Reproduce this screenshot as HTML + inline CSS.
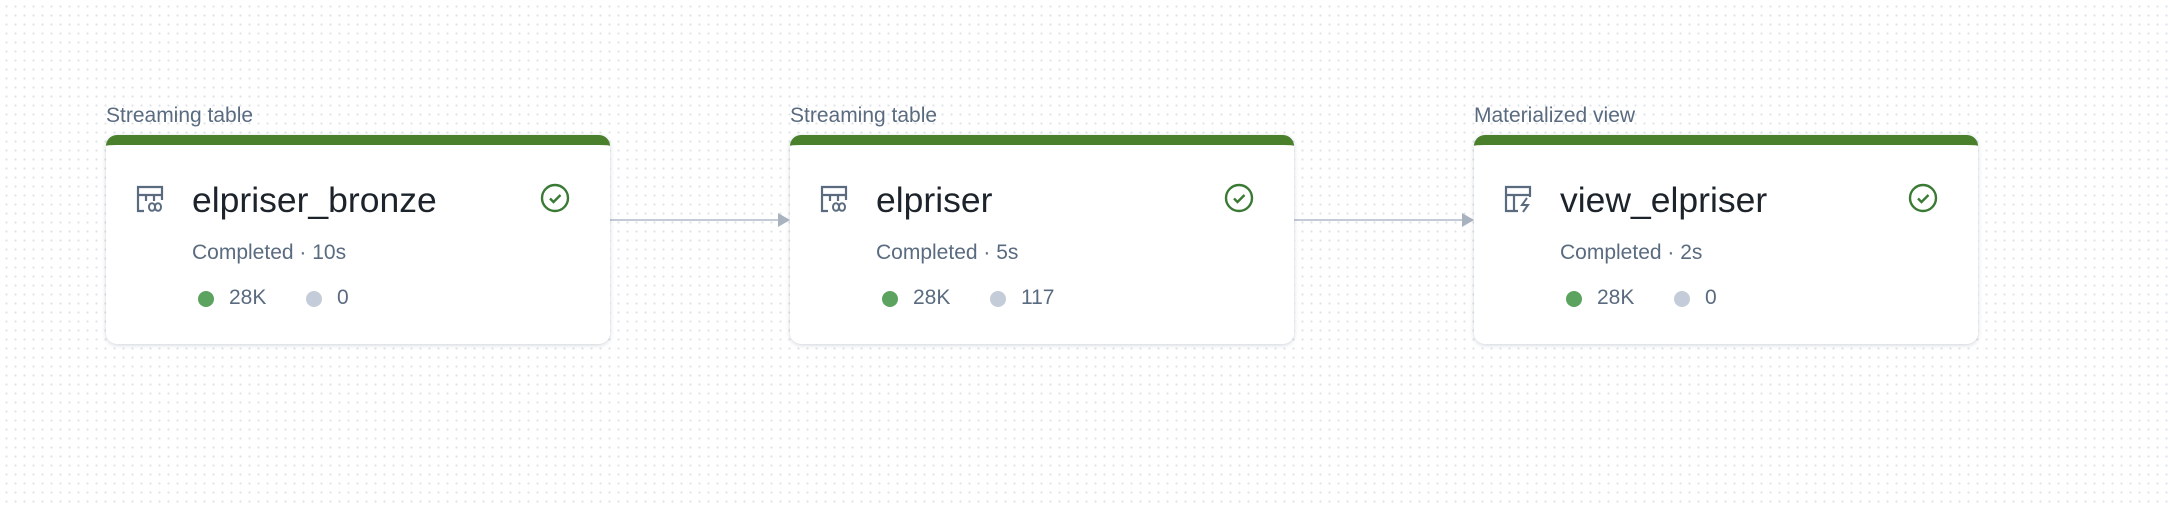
<!DOCTYPE html>
<html><head><style>
body{margin:0;width:2168px;height:506px;overflow:hidden;background:#fff;
background-image:radial-gradient(circle,#dfe3e8 1px,transparent 1.3px);background-size:9px 9px;background-position:2px 2px;
font-family:"Liberation Sans",sans-serif;position:relative}
.lbl{position:absolute;top:104px;font-size:21px;color:#5a6b80}
.card{position:absolute;top:135px;width:504px;height:209px;background:#fff;border-radius:11px;
border-top:10px solid #4a7f2c;box-sizing:border-box;box-shadow:0 1px 4px rgba(60,80,110,.25)}
.ic{position:absolute;left:30px;top:40px}
.t{position:absolute;left:86px;top:35px;font-size:35.5px;color:#1d232b}
.c{position:absolute;left:86px;top:96px;font-size:21px;color:#5a6b80}
.s{position:absolute;top:141px;font-size:21px;color:#5a6b80}
.dot{position:absolute;top:146px;width:16px;height:16px;border-radius:50%}
.chk{position:absolute;left:434px;top:38px}
.edge{position:absolute;top:219px;height:2px;background:#c3cbd7}
</style></head><body>

<div class="lbl" style="left:106px">Streaming table</div>
<div class="lbl" style="left:790px">Streaming table</div>
<div class="lbl" style="left:1474px">Materialized view</div>

<div class="edge" style="left:610px;width:172px"></div>
<svg style="position:absolute;left:778px;top:213px" width="12" height="14"><path d="M0 0L12 7L0 14Z" fill="#a9b3c0"/></svg>
<div class="edge" style="left:1294px;width:172px"></div>
<svg style="position:absolute;left:1462px;top:213px" width="12" height="14"><path d="M0 0L12 7L0 14Z" fill="#a9b3c0"/></svg>

<!-- card 1 -->
<div class="card" style="left:106px">
<svg class="ic" width="28" height="28" viewBox="0 0 28 28" fill="none" stroke="#5a6b80" stroke-width="2.2"><path d="M2 2h24v8H2zM2 2v24h6M10 10v6M18 10v6M26 10v5"/><path d="M13 22c0-5 6-5 6 0s6 5 6 0-6-5-6 0-6 5-6 0" stroke-width="2"/></svg>
<div class="t">elpriser_bronze</div>
<svg class="chk" width="30" height="30" viewBox="0 0 30 30" fill="none" stroke="#3a7a35" stroke-width="2.4"><circle cx="15" cy="15" r="13"/><path d="M10 15.5l3.5 3.5 7-7"/></svg>
<div class="c">Completed · 10s</div>
<div class="dot" style="left:92px;background:#5ca35f"></div><div class="s" style="left:123px">28K</div>
<div class="dot" style="left:200px;background:#c3ccd8"></div><div class="s" style="left:231px">0</div>
</div>

<!-- card 2 -->
<div class="card" style="left:790px">
<svg class="ic" width="28" height="28" viewBox="0 0 28 28" fill="none" stroke="#5a6b80" stroke-width="2.2"><path d="M2 2h24v8H2zM2 2v24h6M10 10v6M18 10v6M26 10v5"/><path d="M13 22c0-5 6-5 6 0s6 5 6 0-6-5-6 0-6 5-6 0" stroke-width="2"/></svg>
<div class="t">elpriser</div>
<svg class="chk" width="30" height="30" viewBox="0 0 30 30" fill="none" stroke="#3a7a35" stroke-width="2.4"><circle cx="15" cy="15" r="13"/><path d="M10 15.5l3.5 3.5 7-7"/></svg>
<div class="c">Completed · 5s</div>
<div class="dot" style="left:92px;background:#5ca35f"></div><div class="s" style="left:123px">28K</div>
<div class="dot" style="left:200px;background:#c3ccd8"></div><div class="s" style="left:231px">117</div>
</div>

<!-- card 3 -->
<div class="card" style="left:1474px">
<svg class="ic" width="30" height="28" viewBox="0 0 30 28" fill="none" stroke="#5a6b80" stroke-width="2.2"><path d="M26 12V2H2v24h12M2 10h24M10 10v16"/><path d="M23 13l-5 7h6l-5 7" stroke-width="2"/></svg>
<div class="t">view_elpriser</div>
<svg class="chk" width="30" height="30" viewBox="0 0 30 30" fill="none" stroke="#3a7a35" stroke-width="2.4"><circle cx="15" cy="15" r="13"/><path d="M10 15.5l3.5 3.5 7-7"/></svg>
<div class="c">Completed · 2s</div>
<div class="dot" style="left:92px;background:#5ca35f"></div><div class="s" style="left:123px">28K</div>
<div class="dot" style="left:200px;background:#c3ccd8"></div><div class="s" style="left:231px">0</div>
</div>

</body></html>
